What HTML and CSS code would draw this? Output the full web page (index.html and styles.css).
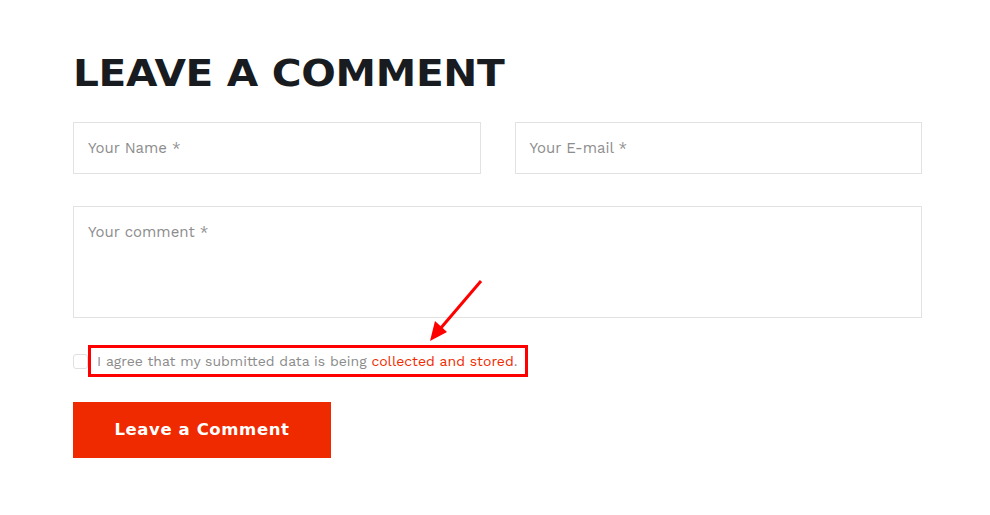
FILE: index.html
```html
<!DOCTYPE html>
<html>
<head>
<meta charset="utf-8">
<link rel="stylesheet" href="styles.css">
</head>
<body>
<section class="comment">
  <h2 class="title">LEAVE A COMMENT</h2>
  <form class="form">
    <div class="row">
      <div class="field">Your Name *</div>
      <div class="field">Your E-mail *</div>
    </div>
    <div class="field area">Your comment *</div>
    <div class="agree">
      <span class="check"></span>
      <span class="label">I agree that my submitted data is being <a class="link">collected and stored</a>.</span>
      <svg class="arrow" width="70" height="80" viewBox="0 0 70 80">
        <line x1="61" y1="7" x2="20" y2="55" stroke="#ff0000" stroke-width="3"/>
        <polygon points="10,67 15,47 27,58" fill="#ff0000"/>
      </svg>
    </div>
    <div class="btn"><span class="btn-text">Leave a Comment</span></div>
  </form>
</section>
</body>
</html>
```
FILE: styles.css
```css
* { box-sizing: border-box; }
body { margin: 0; background: #fff; font-family: "Work Sans", Inter, "Noto Sans", sans-serif; }
.comment { padding: 53px 68px 0 73px; width: 990px; }
.title {
  margin: 0;
  font-family: "DejaVu Sans", sans-serif;
  font-weight: 700;
  font-size: 38px;
  line-height: 40px;
  letter-spacing: -0.3px;
  color: #181b20;
  transform: scaleX(1.07);
  transform-origin: left center;
}
.form { margin-top: 29px; display: flex; flex-direction: column; }
.row { display: flex; gap: 34px; }
.field {
  flex: 1;
  height: 52px;
  border: 1px solid #e2e2e2;
  padding: 16px 14px;
  font-size: 15px;
  line-height: 18px;
  color: #8d8d8d;
}
.area { flex: none; margin-top: 32px; height: 112px; padding-top: 16px; }
.agree { position: relative; margin-top: 27px; display: flex; align-items: center; height: 32px; }
.check {
  width: 15px; height: 15px;
  border: 1px solid #e0e0e0;
  border-radius: 3px;
}
.label {
  border: 3px solid #ff0000;
  height: 32px;
  padding: 0 8px 0 6px;
  font-size: 14px;
  line-height: 26px;
  color: #8b8b8b;
}
.link { color: #ef2a00; }
.arrow { position: absolute; left: 347px; top: -71px; }
.btn {
  margin-top: 25px;
  width: 258px; height: 56px;
  background: #f02a00;
  color: #fff;
  font-family: "DejaVu Sans", sans-serif;
  font-weight: 700;
  font-size: 16.5px;
  line-height: 56px;
  text-align: center;
  letter-spacing: 0.6px;
}
```
